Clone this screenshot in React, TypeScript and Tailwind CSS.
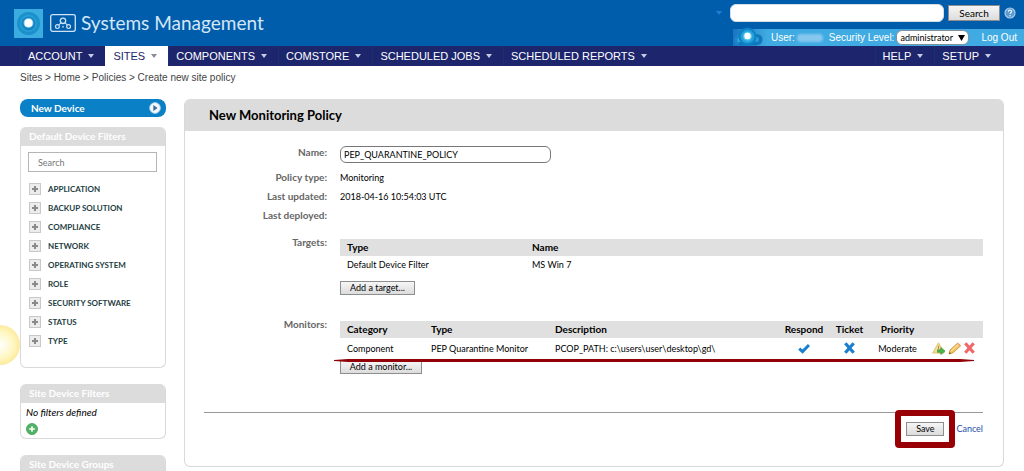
import React from "react";

function Caret({ className }: { className: string }) {
  return (
    <svg width="6" height="4" viewBox="0 0 6 4" className={className} aria-hidden="true">
      <path d="M0 0h6L3 4z" fill="currentColor" />
    </svg>
  );
}

function NavItem({ label, active = false }: { label: string; active?: boolean }) {
  return (
    <a
      href="#"
      className={
        active
          ? "flex h-5 items-center gap-1.5 bg-white pr-[11px] pl-2 text-[#1d266d]"
          : "flex h-5 items-center gap-1.5 border-l border-[#17316f] pr-[11px] pl-[7px] text-white"
      }
    >
      <span>{label}</span>
      <Caret className={active ? "text-[#8b8b98]" : "text-[#c5c9e4]"} />
    </a>
  );
}

function BrandLogo() {
  return (
    <svg width="29" height="29" viewBox="0 0 29 29" aria-hidden="true">
      <rect width="29" height="29" fill="#3aace0" />
      <circle cx="14.5" cy="14.5" r="11.5" fill="#1c90cb" />
      <circle cx="14.5" cy="14.5" r="8.5" fill="#2a9fd8" />
      <circle cx="14.5" cy="14.5" r="7" fill="#1286c2" />
      <circle cx="14.5" cy="14" r="5" fill="#7cc6ea" />
      <circle cx="14.5" cy="14" r="4" fill="#fff" />
    </svg>
  );
}

function ProductIcon() {
  return (
    <svg width="26" height="18" viewBox="0 0 26 18" fill="none" stroke="#cfe3f5" aria-hidden="true">
      <rect x="0.7" y="0.7" width="24.6" height="16.6" rx="2" strokeWidth="1.3" />
      <circle cx="13" cy="6.8" r="2.700" strokeWidth="1.3" />
      <circle cx="7.400" cy="12.600" r="1.900" strokeWidth="1.2" />
      <circle cx="18.600" cy="12.600" r="1.900" strokeWidth="1.2" />
      <path d="M8.800 11l2-2.200M17.200 11l-2-2.200" strokeWidth="1.1" />
      <circle cx="13" cy="12.800" r=".6" fill="#cfe3f5" strokeWidth=".6" />
    </svg>
  );
}

function CloudIcon() {
  return (
    <svg width="30" height="19" viewBox="0 0 30 19" aria-hidden="true">
      <circle cx="6" cy="13" r="5" fill="#1a86cb" />
      <circle cx="24" cy="12.500" r="5.500" fill="#0f78bd" />
      <path d="M6 14h18v4.500H6z" fill="#0f78bd" />
      <circle cx="23.500" cy="12.500" r="2.500" fill="#2b97d3" />
      <circle cx="6.500" cy="13" r="2.300" fill="#38a5dd" />
      <circle cx="14.500" cy="9.500" r="9" fill="#0d83c6" />
      <circle cx="14.500" cy="9.500" r="6.800" fill="#23a2dc" />
      <circle cx="14.500" cy="9.200" r="4.500" fill="#5cc3ea" />
      <circle cx="14.500" cy="9" r="3.200" fill="#fff" />
    </svg>
  );
}

function HelpIcon() {
  return (
    <svg width="12" height="12" viewBox="0 0 12 12" aria-hidden="true">
      <circle cx="6" cy="6" r="5" fill="#5b9bd0" stroke="#a8cbe8" strokeWidth="1.2" />
      <path d="M4.300 4.700c0-2.200 3.400-2.100 3.400-.2C7.700 5.700 6.100 5.800 6.100 7" fill="none" stroke="#e6f1fa" strokeWidth="1.2" />
      <circle cx="6.100" cy="8.700" r=".8" fill="#e6f1fa" />
    </svg>
  );
}

function PlusBox() {
  return (
    <svg width="12" height="12" viewBox="0 0 12 12" aria-hidden="true">
      <rect x="0.5" y="0.5" width="11" height="11" fill="#ececec" stroke="#c9c9c9" />
      <path d="M6 3v6M3 6h6" stroke="#8a8a8a" strokeWidth="2" />
    </svg>
  );
}

function CheckIcon() {
  return (
    <svg width="12" height="11" viewBox="0 0 12 11" aria-label="Yes" role="img">
      <path d="M1.200 5.600L4.600 8.600L11 2" fill="none" stroke="#1a7fd0" strokeWidth="3" />
    </svg>
  );
}

function CrossIcon({ color, label }: { color: string; label: string }) {
  return (
    <svg width="11" height="12" viewBox="0 0 11 12" aria-label={label} role="img">
      <path d="M1.300 1.300L9.700 10.700M9.700 1.300L1.300 10.700" stroke={color} strokeWidth="3.200" />
    </svg>
  );
}

function AlertAddIcon() {
  return (
    <svg width="14" height="13" viewBox="0 0 14 13" aria-label="Alert" role="img">
      <path d="M6.500 .8L12.400 11H.6z" fill="#f3dc98" stroke="#e0c170" strokeWidth="1" />
      <path d="M6.500 3.800v3" stroke="#b78b34" strokeWidth="1" />
      <path d="M5.500 7.800h3.300V5.600l4.200 3.400L8.800 12.500v-2.200H5.500z" fill="#4cb648" stroke="#3b9440" strokeWidth=".7" />
    </svg>
  );
}

function PencilIcon() {
  return (
    <svg width="14" height="13" viewBox="0 0 14 13" aria-label="Edit" role="img">
      <path d="M1 12l1-4L9.500 1.200l3.200 2.600L5 10.800z" fill="#f5c667" stroke="#cf9438" strokeWidth=".9" />
      <path d="M9 1.700l1-.9 3 2.600-1 .9z" fill="#e9a58a" />
      <path d="M3 9l7-6.300" stroke="#fde7ab" strokeWidth="1" />
      <path d="M1 12l.6-2 1.600 1.300z" fill="#7a5a2a" />
    </svg>
  );
}

function PlayIcon() {
  return (
    <svg width="12" height="12" viewBox="0 0 12 12" aria-hidden="true">
      <circle cx="6" cy="6" r="5.400" fill="#f4f8fb" stroke="#a9cde6" strokeWidth=".8" />
      <path d="M4.300 3L8.600 6L4.300 9z" fill="#3b6f97" />
    </svg>
  );
}

function GreenPlus() {
  return (
    <svg width="12" height="12" viewBox="0 0 12 12" aria-hidden="true">
      <circle cx="6" cy="6" r="5.500" fill="#52b265" stroke="#3f9a54" strokeWidth=".8" />
      <path d="M6 3.200v5.600M3.200 6h5.600" stroke="#fff" strokeWidth="1.500" />
    </svg>
  );
}

const pushButton =
  "border border-[#8e8e8e] bg-linear-to-b from-[#f6f6f6] to-[#dcdcdc] text-black whitespace-nowrap";

const filters = [
  "APPLICATION",
  "BACKUP SOLUTION",
  "COMPLIANCE",
  "NETWORK",
  "OPERATING SYSTEM",
  "ROLE",
  "SECURITY SOFTWARE",
  "STATUS",
  "TYPE",
];

function SideTitle({ children }: { children: React.ReactNode }) {
  return (
    <h2 className="h-[19px] bg-[#dcdcdc] px-2 text-[10px] leading-[19px] font-bold text-white">{children}</h2>
  );
}

function Header() {
  return (
    <header className="font-['Liberation_Sans',sans-serif]">
      <div className="flex h-[46px] justify-between bg-[#005dac]">
        <div className="flex items-center gap-[5px] pl-3.5">
          <span className="pr-0.5">
            <BrandLogo />
          </span>
          <ProductIcon />
          <span className="font-['Lato',sans-serif] text-[19px] leading-6 whitespace-nowrap text-[#d5e6f6]">
            Systems Management
          </span>
        </div>
        <div className="flex flex-col items-end justify-between">
          <form className="flex items-center pt-1 pr-2" onSubmit={(e) => e.preventDefault()}>
            <Caret className="mr-2 text-[#1c7fd4]" />
            <input
              aria-label="Search text"
              className="h-[18px] w-[214px] rounded-md border border-[#d5dfe8] bg-white px-1 text-[10px] outline-none"
            />
            <button className={`${pushButton} ml-1 h-4 w-[52px] font-['Lato',sans-serif] text-[10px] leading-[14px]`}>
              Search
            </button>
            <a href="#" aria-label="Help" className="ml-1">
              <HelpIcon />
            </a>
          </form>
          <div className="flex h-[17px] items-center bg-linear-to-r from-[#1a75c0] to-[#40abe2] to-12% pr-[7px] text-[10px] text-white">
            <div className="-mt-0.5 pr-2">
              <CloudIcon />
            </div>
            <span>User:</span>
            <span className="mx-0.5 h-2 w-[26px] rounded-sm bg-[#85c7ee] blur-[1px]" />
            <label htmlFor="level" className="ml-1 whitespace-nowrap">
              Security Level:
            </label>
            <span className="relative ml-0.5 flex items-center">
              <select
                id="level"
                className="h-[15px] w-[73px] appearance-none rounded-md border border-[#7f8f9c] bg-white pl-[3px] font-['Lato',sans-serif] text-[9px] leading-[13px] text-black"
              >
                <option>administrator</option>
              </select>
              <svg width="7" height="6" viewBox="0 0 7 6" className="pointer-events-none absolute right-1" aria-hidden="true">
                <path d="M0 0h7L3.500 6z" fill="#000" />
              </svg>
            </span>
            <a href="#" className="ml-3 whitespace-nowrap">
              Log Out
            </a>
          </div>
        </div>
      </div>
      <nav className="flex h-5 justify-between bg-[#1d266d] pr-[22px] pl-5 text-[11px] whitespace-nowrap">
        <div className="flex">
          <NavItem label="ACCOUNT" />
          <NavItem label="SITES" active />
          <NavItem label="COMPONENTS" />
          <NavItem label="COMSTORE" />
          <NavItem label="SCHEDULED JOBS" />
          <NavItem label="SCHEDULED REPORTS" />
        </div>
        <div className="flex">
          <NavItem label="HELP" />
          <NavItem label="SETUP" />
        </div>
      </nav>
      <p className="px-5 pt-1 text-[10px] leading-4 text-[#444]">
        <a href="#">Sites</a> &gt; <a href="#">Home</a> &gt; <a href="#">Policies</a> &gt; Create new site policy
      </p>
    </header>
  );
}

function Sidebar() {
  return (
    <aside className="relative w-[146px] shrink-0">
      <div className="absolute top-[226px] -left-10 size-10 rounded-full bg-radial from-white via-[#fff6bd] to-[#f7d76a]" />
      <button className="flex h-[18px] w-full items-center justify-between rounded-lg bg-[#0a80c6] pr-[5px] pl-[11px] text-[10px] font-bold text-white">
        New Device
        <PlayIcon />
      </button>
      <section className="mt-2.5 overflow-hidden rounded-md border border-t-0 border-[#d9d9d9] pb-[17px]">
        <SideTitle>Default Device Filters</SideTitle>
        <div className="px-[7px] pt-1.5 pb-[7px]">
          <input
            aria-label="Search filters"
            placeholder="Search"
            className="block h-5 w-[129px] border border-[#b5b5b5] bg-white pl-[9px] text-[9px] outline-none placeholder:text-[#777]"
          />
        </div>
        <ul className="px-2">
          {filters.map((name) => (
            <li key={name}>
              <button className="flex h-[19px] items-center gap-[7px] text-[8px] font-bold whitespace-nowrap text-[#1e3d42]">
                <PlusBox />
                {name}
              </button>
            </li>
          ))}
        </ul>
      </section>
      <section className="mt-4 overflow-hidden rounded-md border border-t-0 border-[#d9d9d9] pb-[3px]">
        <SideTitle>Site Device Filters</SideTitle>
        <p className="pl-[5px] text-[10px] leading-[18px] italic">No filters defined</p>
        <button aria-label="Add filter" className="ml-[5px] block pt-0.5">
          <GreenPlus />
        </button>
      </section>
      <section className="mt-4 overflow-hidden rounded-md border border-t-0 border-[#d9d9d9] pb-5">
        <SideTitle>Site Device Groups</SideTitle>
      </section>
    </aside>
  );
}

const formLabel = "w-[143px] shrink-0 pr-px text-right text-[10px] font-bold text-[#666]";

function PolicyForm() {
  return (
    <main className="min-w-0 flex-1">
      <form
        onSubmit={(e) => e.preventDefault()}
        className="overflow-hidden rounded-md border border-t-0 border-[#d9d9d9] text-[9px] leading-[19px]"
      >
        <h1 className="h-8 bg-[#dcdcdc] pl-6 text-[13px] leading-8 font-bold">New Monitoring Policy</h1>
        <div className="pt-3">
          <div className="flex gap-3 pb-[5px]">
            <label htmlFor="policy-name" className={formLabel}>
              Name:
            </label>
            <input
              id="policy-name"
              defaultValue="PEP_QUARANTINE_POLICY"
              className="mt-[3px] h-[17px] w-[211px] rounded-md border border-[#777] bg-white px-[3px] outline-none"
            />
          </div>
          <dl>
            <div className="flex gap-3">
              <dt className={formLabel}>Policy type:</dt>
              <dd>Monitoring</dd>
            </div>
            <div className="flex gap-3">
              <dt className={formLabel}>Last updated:</dt>
              <dd>2018-04-16 10:54:03 UTC</dd>
            </div>
            <div className="flex gap-3">
              <dt className={formLabel}>Last deployed:</dt>
              <dd />
            </div>
          </dl>
          <div className="flex gap-3 pt-2 pr-5">
            <span id="targets" className={formLabel}>
              Targets:
            </span>
            <div className="min-w-0 flex-1 pt-[6px]">
              <table aria-labelledby="targets" className="w-full table-fixed text-left leading-[17px]">
                <thead className="text-[10px]">
                  <tr className="bg-[#e0e0e0]">
                    <th className="w-[185px] pl-[7px]">Type</th>
                    <th className="pl-[7px]">Name</th>
                  </tr>
                </thead>
                <tbody>
                  <tr>
                    <td className="pl-[7px]">Default Device Filter</td>
                    <td className="pl-[7px]">MS Win 7</td>
                  </tr>
                </tbody>
              </table>
              <button className={`${pushButton} mt-2 block h-[14px] w-[75px] text-[9px] leading-3`}>Add a target...</button>
            </div>
          </div>
          <div className="flex gap-3 pt-5 pr-5">
            <span id="monitors" className={formLabel}>
              Monitors:
            </span>
            <div className="relative min-w-0 flex-1 pt-[6px]">
              <table aria-labelledby="monitors" className="w-full table-fixed text-left leading-[17px]">
                <thead className="text-[10px]">
                  <tr className="bg-[#e0e0e0]">
                    <th className="w-[84px] pl-[7px]">Category</th>
                    <th className="w-[124px] pl-[7px]">Type</th>
                    <th className="pl-[7px]">Description</th>
                    <th className="w-[46px] text-center">Respond</th>
                    <th className="w-[45px] text-center">Ticket</th>
                    <th className="w-[51px] text-center">Priority</th>
                    <th className="w-[60px]" aria-label="Actions" />
                  </tr>
                </thead>
                <tbody>
                  <tr className="h-5">
                    <td className="pl-[7px]">Component</td>
                    <td className="pl-[7px] whitespace-nowrap">PEP Quarantine Monitor</td>
                    <td className="pl-[7px] whitespace-nowrap">PCOP_PATH: c:\users\user\desktop\gd\</td>
                    <td>
                      <div className="flex justify-center">
                        <CheckIcon />
                      </div>
                    </td>
                    <td>
                      <div className="flex justify-center">
                        <CrossIcon color="#1a7fd0" label="No" />
                      </div>
                    </td>
                    <td className="text-center">Moderate</td>
                    <td>
                      <div className="flex justify-end gap-[2px] pr-2">
                        <AlertAddIcon />
                        <PencilIcon />
                        <CrossIcon color="#f0686a" label="Delete" />
                      </div>
                    </td>
                  </tr>
                </tbody>
              </table>
              <div className="absolute top-11 right-[9px] -left-1.5 h-[3px] bg-[#920007] [clip-path:polygon(0_33%,14px_0,calc(100%_-_14px)_0,100%_33%,100%_67%,calc(100%_-_14px)_100%,14px_100%,0_67%)]" />
              <button className={`${pushButton} mt-0.5 block h-[14px] w-[82px] text-[9px] leading-3`}>Add a monitor...</button>
            </div>
          </div>
          <div className="mt-[38px] mr-5 ml-[19px] flex items-center justify-end gap-3 border-t border-[#999] pt-1.5 pb-[28px]">
            <span className="relative flex">
              <button className={`${pushButton} h-[14px] w-[38px] text-[9px] leading-3`}>Save</button>
              <span className="pointer-events-none absolute -inset-x-[11px] -inset-y-3 rounded-sm border-6 border-[#990005]" />
            </span>
            <a href="#" className="text-[#1f4fae]">
              Cancel
            </a>
          </div>
        </div>
      </form>
    </main>
  );
}

export default function App() {
  return (
    <div className="h-screen overflow-hidden bg-white font-['Lato',sans-serif] text-black">
      <Header />
      <div className="flex items-start gap-[18px] px-5 pt-[13px]">
        <Sidebar />
        <PolicyForm />
      </div>
    </div>
  );
}
